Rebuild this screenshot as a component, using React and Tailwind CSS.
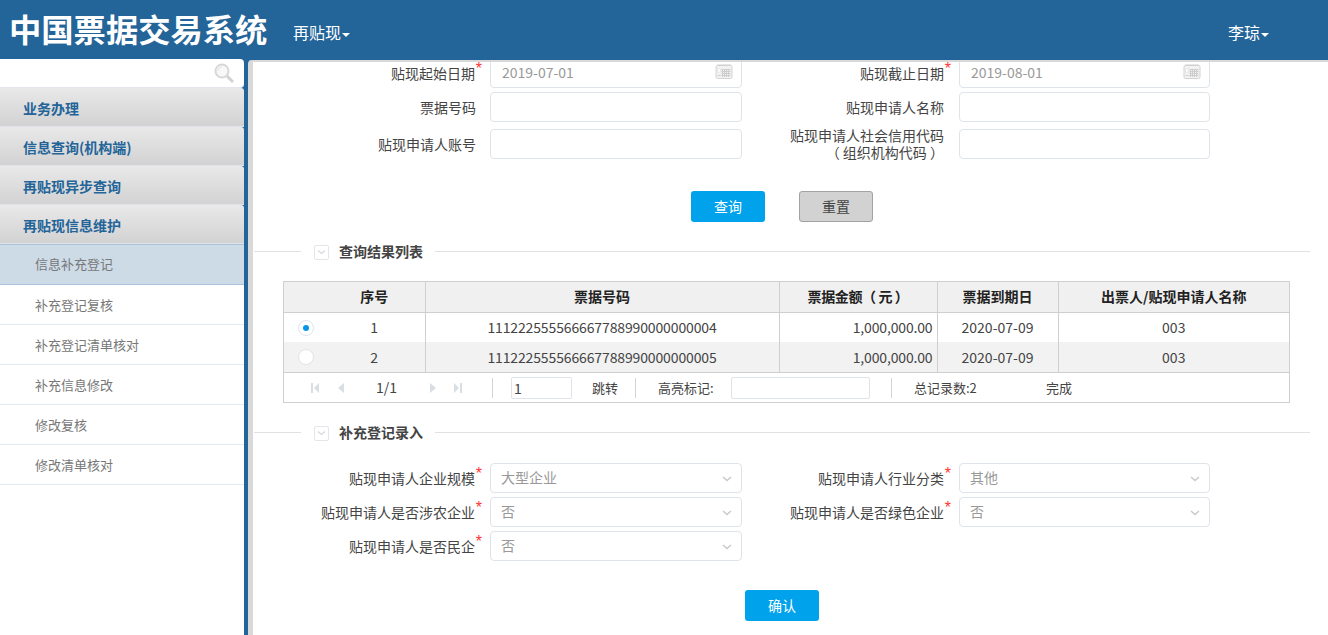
import React from "react";

const font = { fontFamily: '"Noto Sans CJK SC", "Noto Sans", sans-serif' };

const menuGroups = ["业务办理", "信息查询(机构端)", "再贴现异步查询", "再贴现信息维护"];
const subMenus = ["信息补充登记", "补充登记复核", "补充登记清单核对", "补充信息修改", "修改复核", "修改清单核对"];

const rows = [
  { no: 1, code: "111222555566667788990000000004", checked: true },
  { no: 2, code: "111222555566667788990000000005", checked: false },
];

const Caret = () => (
  <span className="inline-block ml-[1px] align-middle w-0 h-0 border-x-[4px] border-x-transparent border-t-[4px] border-t-white" />
);

const CalendarIcon = () => (
  <svg width="18" height="15" viewBox="0 0 17 15" className="absolute right-[8px] top-[5px]">
    <rect x="0.5" y="1.5" width="16" height="13" rx="1.5" fill="#f2f2f2" stroke="#d4d4d4" />
    <path d="M2 1h13" stroke="#cfcfcf" strokeDasharray="1 1" strokeWidth="2" />
    <rect x="2" y="5" width="3" height="3" fill="#fff" stroke="#d8d8d8" strokeWidth="0.5" />
    <path d="M6 5.5h9M6 7.5h9M6 9.5h9M6 11.5h9M2 11.5h3M7 5v8M9 5v8M11 5v8M13 5v8" stroke="#cdcdcd" strokeWidth="1" />
  </svg>
);

const Chevron = () => (
  <svg width="10" height="6" viewBox="0 0 10 6" className="absolute right-[9px] top-[12px]">
    <path d="M1 1l4 3.5L9 1" fill="none" stroke="#c9c9c9" strokeWidth="1.5" />
  </svg>
);

const Label = ({ children, star, wide }) => (
  <div
    className={`relative h-[30px] flex items-center justify-end text-[14px] leading-[17px] text-[#444] text-right ${
      star || wide ? "pr-[15px]" : "pr-[14px]"
    }`}
  >
    <div>{children}</div>
    {star && (
      <span
        style={{ fontFamily: '"Liberation Sans", sans-serif' }}
        className="absolute right-[8px] top-[4px] text-[#f33] text-[16px] leading-[14px]"
      >
        *
      </span>
    )}
  </div>
);

const Field = ({ value, icon }) => (
  <div
    className={`relative h-[30px] border border-[#dfe3ea] rounded-[4px] bg-white text-[14px] leading-[27px] text-[#999] ${
      icon === "select" ? "pl-[10px]" : "pl-[11px]"
    }`}
  >
    {value}
    {icon === "date" && <CalendarIcon />}
    {icon === "select" && <Chevron />}
  </div>
);

const SectionTitle = ({ title }) => (
  <div className="relative h-[1px] bg-[#dfe1e5] ml-[1px] mr-[18px]">
    <div className="absolute left-[47px] top-[-10px] h-[20px] bg-white flex items-center gap-[10px] pl-[13px] pr-[12px]">
      <span className="w-[15px] h-[15px] mt-[3px] border border-[#e3e6ec] rounded-[2px] flex items-center justify-center">
        <svg width="9" height="5" viewBox="0 0 9 5">
          <path d="M1 0.5l3.5 3 3.5-3" fill="none" stroke="#d5d8de" strokeWidth="1.2" />
        </svg>
      </span>
      <span className="text-[14px] font-bold text-[#444] leading-[20px]">{title}</span>
    </div>
  </div>
);

const PagerIcon = ({ d }) => (
  <svg width="10" height="12" viewBox="0 0 10 12">
    <path d={d} fill="#d9dee3" />
  </svg>
);

export default function App() {
  return (
    <div style={font} className="w-[1328px] h-[635px] overflow-hidden bg-[#236499] flex flex-col">
      {/* HEADER */}
      <header className="h-[59px] shrink-0 flex items-center text-white">
        <h1 className="ml-[9px] mb-[3px] text-[32.3px] font-bold leading-[56px] w-[284px] whitespace-nowrap">中国票据交易系统</h1>
        <div className="text-[16px] pt-[5px]">再贴现<Caret /></div>
        <div className="ml-auto mr-[58px] pt-[5px] text-[16px] w-[42px]">李琼<Caret /></div>
      </header>

      <div className="flex flex-1 min-h-0">
        {/* SIDEBAR */}
        <aside className="w-[244px] shrink-0 flex flex-col">
          <div className="h-[29px] bg-white border-b border-[#e3e6ee] rounded-[4px] rounded-l-none flex items-center justify-end pr-[10px]">
            <svg width="20" height="20" viewBox="0 0 20 20">
              <circle cx="8" cy="8" r="6.5" fill="#f8f8f8" stroke="#d8d8d8" strokeWidth="2" />
              <path d="M4 8a4 4 0 0 1 4-4" fill="none" stroke="#e4e4e4" strokeWidth="1" />
              <path d="M13 13l6 6" stroke="#d2d2d2" strokeWidth="3" />
            </svg>
          </div>
          {menuGroups.map((name) => (
            <div
              key={name}
              className="h-[39px] shrink-0 pl-[23px] border-b border-[#dfe3e8] rounded-tr-[3px] bg-gradient-to-b from-[#e9e9e9] to-[#d2d2d2] text-[14px] font-bold text-[#236499] leading-[41px]"
            >
              {name}
            </div>
          ))}
          {subMenus.map((name, index) => (
            <div
              key={name}
              className={`shrink-0 pl-[35px] text-[13px] text-[#777] ${
                index === 0
                  ? "h-[41px] leading-[38px] bg-[#cddbe7] border-y border-y-[#a9c3dc]"
                  : "h-[40px] leading-[39px] bg-white border-b border-[#e3e9f0]"
              }`}
            >
              {name}
            </div>
          ))}
          <div className="flex-1 bg-white" />
        </aside>

        {/* MAIN */}
        <main className="flex-1 min-w-0 ml-[4px] mt-[1px] bg-white border-l-[5px] border-t-[2px] border-[#d9d9d9] rounded-tl-[4px] overflow-hidden">
          {/* QUERY FORM */}
          <div className="grid grid-cols-[237px_252px_217px_251px] mt-[-4px] grid-rows-[30px_33px_30px] gap-y-[4px] items-start">
            <Label star>贴现起始日期</Label>
            <Field value="2019-07-01" icon="date" />
            <Label star>贴现截止日期</Label>
            <Field value="2019-08-01" icon="date" />
            <Label>票据号码</Label>
            <Field />
            <Label wide>贴现申请人名称</Label>
            <Field />
            <Label>贴现申请人账号</Label>
            <Field />
            <Label wide>贴现申请人社会信用代码<br />（ 组织机构代码 ）</Label>
            <Field />
          </div>

          <div className="flex mt-[32px] ml-[438px] gap-[34px]">
            <button className="w-[74px] h-[31px] rounded-[3px] bg-[#00a2eb] text-white text-[14px]">查询</button>
            <button className="w-[74px] h-[31px] rounded-[3px] bg-[#d2d2d2] border border-[#a3a3a3] text-[#444] text-[14px]">重置</button>
          </div>

          <div className="mt-[29px]">
            <SectionTitle title="查询结果列表" />
          </div>

          {/* RESULT TABLE */}
          <div className="ml-[30px] mt-[29px] w-[1007px] border border-[#cfcfcf] text-[14px] text-[#444]">
            <table className="w-full table-fixed border-collapse">
              <colgroup>
                <col className="w-[141px]" />
                <col className="w-[354px]" />
                <col className="w-[158px]" />
                <col className="w-[121px]" />
                <col />
              </colgroup>
              <thead>
                <tr className="h-[30px] bg-[#f0f0f0] text-[14px] font-bold text-[#222] border-b border-[#cfcfcf]">
                  <th className="pl-[40px] border-r border-[#cfcfcf]">序号</th>
                  <th className="border-r border-[#cfcfcf]">票据号码</th>
                  <th className="tracking-[-0.4px] border-r border-[#cfcfcf]">票据金额（ 元 ）</th>
                  <th className="border-r border-[#cfcfcf]">票据到期日</th>
                  <th>出票人/贴现申请人名称</th>
                </tr>
              </thead>
              <tbody>
                {rows.map((row) => (
                  <tr key={row.no} className={`h-[30px] ${row.checked ? "bg-white" : "bg-[#f2f2f2]"}`}>
                    <td className="relative pl-[40px] text-center border-r border-[#cfcfcf]">
                      <span className="absolute left-[14px] top-[7px] w-[16px] h-[16px] rounded-full bg-white border border-[#dfe3ea] flex items-center justify-center">
                        {row.checked && <span className="w-[6px] h-[6px] rounded-full bg-[#0a96e8]" />}
                      </span>
                      {row.no}
                    </td>
                    <td className="text-center tracking-[-0.13px] border-r border-[#cfcfcf]">{row.code}</td>
                    <td className="text-right pr-[4px] tracking-[-0.15px] border-r border-[#cfcfcf]">1,000,000.00</td>
                    <td className="text-center border-r border-[#cfcfcf]">2020-07-09</td>
                    <td className="text-center">003</td>
                  </tr>
                ))}
              </tbody>
            </table>

            {/* PAGER */}
            <div className="h-[30px] border-t border-[#cfcfcf] flex items-center text-[13px]">
              <div className="w-[209px] flex items-center shrink-0 border-r border-[#d5d5d5] h-[20px]">
                <span className="ml-[26px]"><PagerIcon d="M1 1h2v10H1zM9 1v10L4 6z" /></span>
                <span className="ml-[16px]"><PagerIcon d="M8 1v10L2 6z" /></span>
                <span className="ml-[30px] w-[52px] text-[14px]">1/1</span>
                <span><PagerIcon d="M2 1v10l6-5z" /></span>
                <span className="ml-[15px]"><PagerIcon d="M1 1v10l5-5zM7 1h2v10H7z" /></span>
              </div>
              <div className="ml-[18px] w-[61px] h-[22px] border border-[#dfe3ea] rounded-[2px] pl-[2px] text-[14px] leading-[20px]">1</div>
              <div className="ml-[20px] w-[44px] shrink-0 border-r border-[#d5d5d5] h-[20px] leading-[20px]">跳转</div>
              <div className="ml-[22px] w-[73px]">高亮标记:</div>
              <div className="w-[139px] h-[22px] border border-[#dfe3ea] rounded-[2px]" />
              <div className="ml-[21px] h-[20px] border-r border-[#d5d5d5]" />
              <div className="ml-[22px] w-[132px]">总记录数:2</div>
              <div>完成</div>
            </div>
          </div>

          <div className="mt-[29px]">
            <SectionTitle title="补充登记录入" />
          </div>

          {/* SUPPLEMENT FORM */}
          <div className="grid grid-cols-[237px_252px_217px_251px] mt-[30px] grid-rows-[30px_30px_30px] gap-y-[4px]">
            <Label star>贴现申请人企业规模</Label>
            <Field value="大型企业" icon="select" />
            <Label star>贴现申请人行业分类</Label>
            <Field value="其他" icon="select" />
            <Label star>贴现申请人是否涉农企业</Label>
            <Field value="否" icon="select" />
            <Label star>贴现申请人是否绿色企业</Label>
            <Field value="否" icon="select" />
            <Label star>贴现申请人是否民企</Label>
            <Field value="否" icon="select" />
          </div>

          <button className="block mt-[29px] ml-[492px] w-[74px] h-[31px] rounded-[3px] bg-[#00a2eb] text-white text-[14px]">确认</button>
        </main>
      </div>
    </div>
  );
}
